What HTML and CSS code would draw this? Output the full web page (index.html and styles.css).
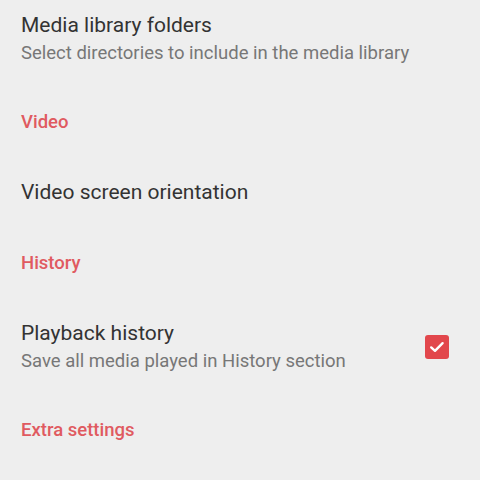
FILE: index.html
```html
<!DOCTYPE html>
<html lang="en">

<head>
    <meta charset="UTF-8">
    <meta name="viewport" content="width=device-width, initial-scale=1.0">
    <title>Preferences</title>
    <link rel="stylesheet" href="styles.css">
</head>

<body>
    <div class="prefs">
        <div class="pref first">
            <div class="pref-text">
                <div class="pref-title">Media library folders</div>
                <div class="pref-summary">Select directories to include in the media library</div>
            </div>
        </div>

        <div class="category">Video</div>

        <div class="pref">
            <div class="pref-text">
                <div class="pref-title">Video screen orientation</div>
            </div>
        </div>

        <div class="category">History</div>

        <div class="pref">
            <div class="pref-text">
                <div class="pref-title">Playback history</div>
                <div class="pref-summary">Save all media played in History section</div>
            </div>
            <div class="checkbox checked">
                <svg width="18" height="18" viewBox="0 0 18 18">
                    <path d="M3.2 9.4 L7 12.8 L14.6 5.2" fill="none" stroke="#fff" stroke-width="2.4" stroke-linecap="round" stroke-linejoin="round"/>
                </svg>
            </div>
        </div>

        <div class="category">Extra settings</div>
    </div>
</body>

</html>
```

FILE: styles.css
```css
* {
    padding: 0;
    margin: 0;
    box-sizing: border-box;
}

body {
    background-color: #eeeeee;
    font-family: Roboto, "Noto Sans", sans-serif;
}

.prefs {
    display: flex;
    flex-direction: column;
    padding-left: 21px;
    padding-right: 31px;
}

.pref {
    display: flex;
    align-items: center;
    padding: 23px 0;
}

.pref.first {
    padding-top: 13px;
}

.pref-text {
    flex: 1;
}

.pref-title {
    font-size: 21px;
    line-height: 25px;
    color: #333333;
}

.pref-summary {
    margin-top: 4px;
    font-size: 18.5px;
    line-height: 22px;
    color: #777777;
}

.category {
    padding: 24px 0;
    font-size: 18.5px;
    line-height: 22px;
    font-weight: 500;
    color: #e05a60;
}

.checkbox {
    width: 24px;
    height: 24px;
    border-radius: 3px;
    display: flex;
    align-items: center;
    justify-content: center;
}

.checkbox.checked {
    background-color: #e2474c;
}
```
